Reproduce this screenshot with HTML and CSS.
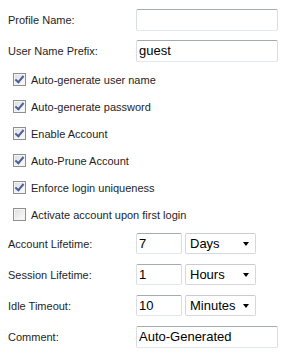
FILE: index.html
```html
<!DOCTYPE html>
<html lang="en">
<head>
  <meta charset="UTF-8" />
  <title>Guest Profile</title>
  <link rel="stylesheet" href="styles.css">
</head>
<body>
  <form class="profile-form">
    <div class="field-row">
      <label class="field-label">Profile Name:</label>
      <input class="text-input wide" type="text" value="" />
    </div>
    <div class="field-row">
      <label class="field-label">User Name Prefix:</label>
      <input class="text-input wide" type="text" value="guest" />
    </div>

    <div class="check-list">
      <label class="check-row"><span class="check-box checked"></span>Auto-generate user name</label>
      <label class="check-row"><span class="check-box checked"></span>Auto-generate password</label>
      <label class="check-row"><span class="check-box checked"></span>Enable Account</label>
      <label class="check-row"><span class="check-box checked"></span>Auto-Prune Account</label>
      <label class="check-row"><span class="check-box checked"></span>Enforce login uniqueness</label>
      <label class="check-row"><span class="check-box"></span>Activate account upon first login</label>
    </div>

    <div class="field-row">
      <label class="field-label">Account Lifetime:</label>
      <input class="text-input short" type="text" value="7" />
      <span class="select-box"><select><option>Days</option></select></span>
    </div>
    <div class="field-row">
      <label class="field-label">Session Lifetime:</label>
      <input class="text-input short" type="text" value="1" />
      <span class="select-box"><select><option>Hours</option></select></span>
    </div>
    <div class="field-row">
      <label class="field-label">Idle Timeout:</label>
      <input class="text-input short" type="text" value="10" />
      <span class="select-box"><select><option>Minutes</option></select></span>
    </div>
    <div class="field-row">
      <label class="field-label">Comment:</label>
      <input class="text-input wide" type="text" value="Auto-Generated" />
    </div>
  </form>
</body>
</html>
```

FILE: styles.css
```css
html, body {
  margin: 0;
  padding: 0;
  background: #fff;
  font-family: 'Liberation Sans', Arial, sans-serif;
  font-size: 11px;
  color: #1e1e1e;
}
.profile-form {
  padding: 4px 0 0 0;
  width: 283px;
}
.field-row {
  display: flex;
  align-items: center;
  height: 31px;
}
.field-label {
  width: 128px;
  padding-left: 8px;
}
.text-input {
  box-sizing: border-box;
  height: 22px;
  margin: 0;
  padding: 0 2px;
  border: 1px solid;
  border-color: #a5a9b0 #d9dde4 #e3e8ee #d9dde4;
  border-radius: 2px;
  font-family: 'Liberation Sans', Arial, sans-serif;
  font-size: 13px;
  color: #000;
  background: #fff;
  outline: none;
}
.text-input.wide {
  width: 142px;
}
.text-input.short {
  width: 46px;
  height: 21px;
}
.select-box {
  position: relative;
  margin-left: 3px;
  width: 71px;
  height: 21px;
}
.select-box select {
  -webkit-appearance: none;
  appearance: none;
  box-sizing: border-box;
  width: 100%;
  height: 100%;
  margin: 0;
  padding: 0 0 0 4px;
  border: 1px solid;
  border-color: #c8ccd2 #d4d8de #d4d8de #d4d8de;
  border-radius: 2px;
  background: #fff;
  font-family: 'Liberation Sans', Arial, sans-serif;
  font-size: 13px;
  color: #000;
  outline: none;
}
.select-box::after {
  content: "";
  position: absolute;
  right: 7px;
  top: 9px;
  border-left: 3.5px solid transparent;
  border-right: 3.5px solid transparent;
  border-top: 4px solid #000;
  pointer-events: none;
}
.check-list {
  display: flex;
  flex-direction: column;
}
.check-row {
  display: flex;
  align-items: center;
  height: 27px;
  padding-left: 13px;
}
.check-box {
  box-sizing: border-box;
  position: relative;
  width: 13px;
  height: 13px;
  margin-right: 5px;
  border: 1px solid #8e8f8f;
  background: linear-gradient(135deg, #dcdcdc 0%, #f0f0f0 60%, #fbfbfb 100%);
  box-shadow: inset 0 0 0 1px #f4f4f4;
}
.check-box.checked::after {
  content: "";
  position: absolute;
  left: 3px;
  top: 0px;
  width: 3px;
  height: 7px;
  border-right: 2px solid #4a5f9a;
  border-bottom: 2px solid #4a5f9a;
  transform: rotate(40deg);
}
```
